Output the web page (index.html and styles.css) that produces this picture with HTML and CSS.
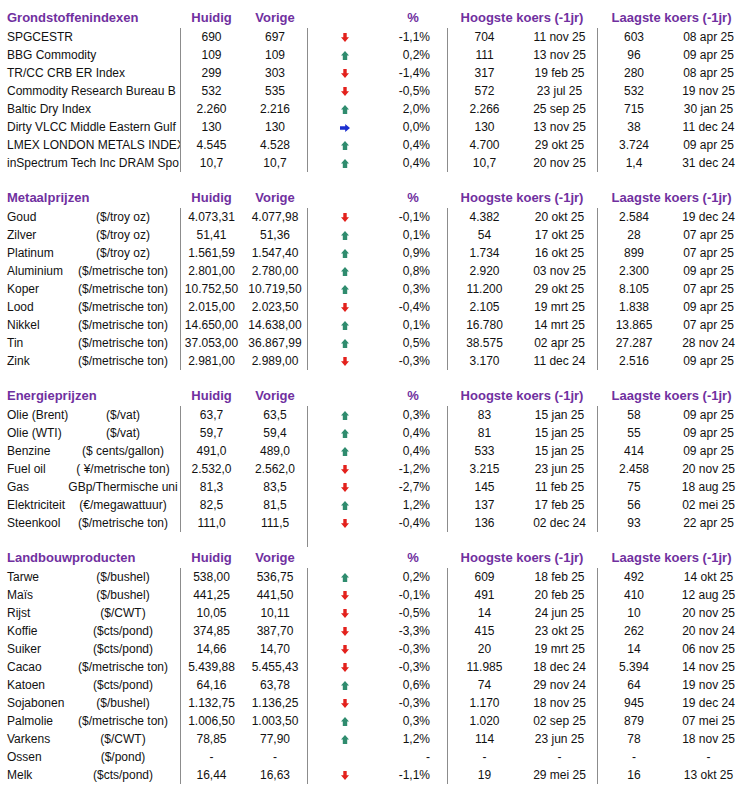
FILE: index.html
```html
<!DOCTYPE html>
<html lang="nl">
<head>
<meta charset="utf-8">
<title>Grondstoffen</title>
<link rel="stylesheet" href="styles.css">
</head>
<body>
<svg class="defs" aria-hidden="true">
  <symbol id="dn" viewBox="0 0 8 9"><path d="M2.3 0h3.4v4.2H8L4 9 0 4.2h2.3z" fill="#e3211c"/></symbol>
  <symbol id="up" viewBox="0 0 8 9"><path d="M4 0l4 4.6H6.2V9H1.8V4.6H0z" fill="#2f8c6e"/></symbol>
  <symbol id="rt" viewBox="0 0 10 8"><path d="M0 2.3h5.2V0L10 4 5.2 8V5.7H0z" fill="#1b2fd0"/></symbol>
</svg>
<table class="grid">
<colgroup>
<col class="c-name"><col class="c-unit"><col class="c-cur"><col class="c-prev"><col class="c-arrow"><col class="c-pct"><col class="c-hv"><col class="c-hd"><col class="c-lv"><col class="c-ld">
</colgroup>
<tbody>
<tr class="head"><th colspan="2" class="title">Grondstoffenindexen</th><th>Huidig</th><th>Vorige</th><th></th><th class="pct-h">%</th><th colspan="2">Hoogste koers (-1jr)</th><th colspan="2">Laagste koers (-1jr)</th></tr>
<tr class="row"><td colspan="2" class="name clip">SPGCESTR</td><td class="sep">690</td><td>697</td><td class="sep"><svg class="arr"><use href="#dn"/></svg></td><td class="pct">-1,1%</td><td class="sep">704</td><td>11 nov 25</td><td class="sep">603</td><td>08 apr 25</td></tr>
<tr class="row"><td colspan="2" class="name clip">BBG Commodity</td><td class="sep">109</td><td>109</td><td class="sep"><svg class="arr"><use href="#up"/></svg></td><td class="pct">0,2%</td><td class="sep">111</td><td>13 nov 25</td><td class="sep">96</td><td>09 apr 25</td></tr>
<tr class="row"><td colspan="2" class="name clip">TR/CC CRB ER Index</td><td class="sep">299</td><td>303</td><td class="sep"><svg class="arr"><use href="#dn"/></svg></td><td class="pct">-1,4%</td><td class="sep">317</td><td>19 feb 25</td><td class="sep">280</td><td>08 apr 25</td></tr>
<tr class="row"><td colspan="2" class="name clip">Commodity Research Bureau B</td><td class="sep">532</td><td>535</td><td class="sep"><svg class="arr"><use href="#dn"/></svg></td><td class="pct">-0,5%</td><td class="sep">572</td><td>23 jul 25</td><td class="sep">532</td><td>19 nov 25</td></tr>
<tr class="row"><td colspan="2" class="name clip">Baltic Dry Index</td><td class="sep">2.260</td><td>2.216</td><td class="sep"><svg class="arr"><use href="#up"/></svg></td><td class="pct">2,0%</td><td class="sep">2.266</td><td>25 sep 25</td><td class="sep">715</td><td>30 jan 25</td></tr>
<tr class="row"><td colspan="2" class="name clip">Dirty VLCC Middle Eastern Gulf</td><td class="sep">130</td><td>130</td><td class="sep"><svg class="arr wide"><use href="#rt"/></svg></td><td class="pct">0,0%</td><td class="sep">130</td><td>13 nov 25</td><td class="sep">38</td><td>11 dec 24</td></tr>
<tr class="row"><td colspan="2" class="name clip">LMEX LONDON METALS INDEX</td><td class="sep">4.545</td><td>4.528</td><td class="sep"><svg class="arr"><use href="#up"/></svg></td><td class="pct">0,4%</td><td class="sep">4.700</td><td>29 okt 25</td><td class="sep">3.724</td><td>09 apr 25</td></tr>
<tr class="row"><td colspan="2" class="name clip">inSpectrum Tech Inc DRAM Spo</td><td class="sep">10,7</td><td>10,7</td><td class="sep"><svg class="arr"><use href="#up"/></svg></td><td class="pct">0,4%</td><td class="sep">10,7</td><td>20 nov 25</td><td class="sep">1,4</td><td>31 dec 24</td></tr>
<tr class="gap"><td colspan="10"></td></tr>

<tr class="head"><th colspan="2" class="title">Metaalprijzen</th><th>Huidig</th><th>Vorige</th><th></th><th class="pct-h">%</th><th colspan="2">Hoogste koers (-1jr)</th><th colspan="2">Laagste koers (-1jr)</th></tr>
<tr class="row"><td class="name">Goud</td><td><div class="u">($/troy oz)</div></td><td class="sep">4.073,31</td><td>4.077,98</td><td class="sep"><svg class="arr"><use href="#dn"/></svg></td><td class="pct">-0,1%</td><td class="sep">4.382</td><td>20 okt 25</td><td class="sep">2.584</td><td>19 dec 24</td></tr>
<tr class="row"><td class="name">Zilver</td><td><div class="u">($/troy oz)</div></td><td class="sep">51,41</td><td>51,36</td><td class="sep"><svg class="arr"><use href="#up"/></svg></td><td class="pct">0,1%</td><td class="sep">54</td><td>17 okt 25</td><td class="sep">28</td><td>07 apr 25</td></tr>
<tr class="row"><td class="name">Platinum</td><td><div class="u">($/troy oz)</div></td><td class="sep">1.561,59</td><td>1.547,40</td><td class="sep"><svg class="arr"><use href="#up"/></svg></td><td class="pct">0,9%</td><td class="sep">1.734</td><td>16 okt 25</td><td class="sep">899</td><td>07 apr 25</td></tr>
<tr class="row"><td class="name">Aluminium</td><td><div class="u">($/metrische ton)</div></td><td class="sep">2.801,00</td><td>2.780,00</td><td class="sep"><svg class="arr"><use href="#up"/></svg></td><td class="pct">0,8%</td><td class="sep">2.920</td><td>03 nov 25</td><td class="sep">2.300</td><td>09 apr 25</td></tr>
<tr class="row"><td class="name">Koper</td><td><div class="u">($/metrische ton)</div></td><td class="sep">10.752,50</td><td>10.719,50</td><td class="sep"><svg class="arr"><use href="#up"/></svg></td><td class="pct">0,3%</td><td class="sep">11.200</td><td>29 okt 25</td><td class="sep">8.105</td><td>07 apr 25</td></tr>
<tr class="row"><td class="name">Lood</td><td><div class="u">($/metrische ton)</div></td><td class="sep">2.015,00</td><td>2.023,50</td><td class="sep"><svg class="arr"><use href="#dn"/></svg></td><td class="pct">-0,4%</td><td class="sep">2.105</td><td>19 mrt 25</td><td class="sep">1.838</td><td>09 apr 25</td></tr>
<tr class="row"><td class="name">Nikkel</td><td><div class="u">($/metrische ton)</div></td><td class="sep">14.650,00</td><td>14.638,00</td><td class="sep"><svg class="arr"><use href="#up"/></svg></td><td class="pct">0,1%</td><td class="sep">16.780</td><td>14 mrt 25</td><td class="sep">13.865</td><td>07 apr 25</td></tr>
<tr class="row"><td class="name">Tin</td><td><div class="u">($/metrische ton)</div></td><td class="sep">37.053,00</td><td>36.867,99</td><td class="sep"><svg class="arr"><use href="#up"/></svg></td><td class="pct">0,5%</td><td class="sep">38.575</td><td>02 apr 25</td><td class="sep">27.287</td><td>28 nov 24</td></tr>
<tr class="row"><td class="name">Zink</td><td><div class="u">($/metrische ton)</div></td><td class="sep">2.981,00</td><td>2.989,00</td><td class="sep"><svg class="arr"><use href="#dn"/></svg></td><td class="pct">-0,3%</td><td class="sep">3.170</td><td>11 dec 24</td><td class="sep">2.516</td><td>09 apr 25</td></tr>
<tr class="gap"><td colspan="10"></td></tr>

<tr class="head"><th colspan="2" class="title">Energieprijzen</th><th>Huidig</th><th>Vorige</th><th></th><th class="pct-h">%</th><th colspan="2">Hoogste koers (-1jr)</th><th colspan="2">Laagste koers (-1jr)</th></tr>
<tr class="row"><td class="name">Olie (Brent)</td><td><div class="u">($/vat)</div></td><td class="sep">63,7</td><td>63,5</td><td class="sep"><svg class="arr"><use href="#up"/></svg></td><td class="pct">0,3%</td><td class="sep">83</td><td>15 jan 25</td><td class="sep">58</td><td>09 apr 25</td></tr>
<tr class="row"><td class="name">Olie (WTI)</td><td><div class="u">($/vat)</div></td><td class="sep">59,7</td><td>59,4</td><td class="sep"><svg class="arr"><use href="#up"/></svg></td><td class="pct">0,4%</td><td class="sep">81</td><td>15 jan 25</td><td class="sep">55</td><td>09 apr 25</td></tr>
<tr class="row"><td class="name">Benzine</td><td><div class="u">($ cents/gallon)</div></td><td class="sep">491,0</td><td>489,0</td><td class="sep"><svg class="arr"><use href="#up"/></svg></td><td class="pct">0,4%</td><td class="sep">533</td><td>15 jan 25</td><td class="sep">414</td><td>09 apr 25</td></tr>
<tr class="row"><td class="name">Fuel oil</td><td><div class="u">( ¥/metrische ton)</div></td><td class="sep">2.532,0</td><td>2.562,0</td><td class="sep"><svg class="arr"><use href="#dn"/></svg></td><td class="pct">-1,2%</td><td class="sep">3.215</td><td>23 jun 25</td><td class="sep">2.458</td><td>20 nov 25</td></tr>
<tr class="row"><td class="name">Gas</td><td><div class="u">GBp/Thermische uni</div></td><td class="sep">81,3</td><td>83,5</td><td class="sep"><svg class="arr"><use href="#dn"/></svg></td><td class="pct">-2,7%</td><td class="sep">145</td><td>11 feb 25</td><td class="sep">75</td><td>18 aug 25</td></tr>
<tr class="row"><td class="name">Elektriciteit</td><td><div class="u">(€/megawattuur)</div></td><td class="sep">82,5</td><td>81,5</td><td class="sep"><svg class="arr"><use href="#up"/></svg></td><td class="pct">1,2%</td><td class="sep">137</td><td>17 feb 25</td><td class="sep">56</td><td>02 mei 25</td></tr>
<tr class="row"><td class="name">Steenkool</td><td><div class="u">($/metrische ton)</div></td><td class="sep">111,0</td><td>111,5</td><td class="sep"><svg class="arr"><use href="#dn"/></svg></td><td class="pct">-0,4%</td><td class="sep">136</td><td>02 dec 24</td><td class="sep">93</td><td>22 apr 25</td></tr>
<tr class="gap"><td colspan="4"></td><td class="sep"></td><td colspan="5"></td></tr>

<tr class="head"><th colspan="2" class="title">Landbouwproducten</th><th>Huidig</th><th>Vorige</th><th></th><th class="pct-h">%</th><th colspan="2">Hoogste koers (-1jr)</th><th colspan="2">Laagste koers (-1jr)</th></tr>
<tr class="row"><td class="name">Tarwe</td><td><div class="u">($/bushel)</div></td><td class="sep">538,00</td><td>536,75</td><td class="sep"><svg class="arr"><use href="#up"/></svg></td><td class="pct">0,2%</td><td class="sep">609</td><td>18 feb 25</td><td class="sep">492</td><td>14 okt 25</td></tr>
<tr class="row"><td class="name">Maïs</td><td><div class="u">($/bushel)</div></td><td class="sep">441,25</td><td>441,50</td><td class="sep"><svg class="arr"><use href="#dn"/></svg></td><td class="pct">-0,1%</td><td class="sep">491</td><td>20 feb 25</td><td class="sep">410</td><td>12 aug 25</td></tr>
<tr class="row"><td class="name">Rijst</td><td><div class="u">($/CWT)</div></td><td class="sep">10,05</td><td>10,11</td><td class="sep"><svg class="arr"><use href="#dn"/></svg></td><td class="pct">-0,5%</td><td class="sep">14</td><td>24 jun 25</td><td class="sep">10</td><td>20 nov 25</td></tr>
<tr class="row"><td class="name">Koffie</td><td><div class="u">($cts/pond)</div></td><td class="sep">374,85</td><td>387,70</td><td class="sep"><svg class="arr"><use href="#dn"/></svg></td><td class="pct">-3,3%</td><td class="sep">415</td><td>23 okt 25</td><td class="sep">262</td><td>20 nov 24</td></tr>
<tr class="row"><td class="name">Suiker</td><td><div class="u">($cts/pond)</div></td><td class="sep">14,66</td><td>14,70</td><td class="sep"><svg class="arr"><use href="#dn"/></svg></td><td class="pct">-0,3%</td><td class="sep">20</td><td>19 mrt 25</td><td class="sep">14</td><td>06 nov 25</td></tr>
<tr class="row"><td class="name">Cacao</td><td><div class="u">($/metrische ton)</div></td><td class="sep">5.439,88</td><td>5.455,43</td><td class="sep"><svg class="arr"><use href="#dn"/></svg></td><td class="pct">-0,3%</td><td class="sep">11.985</td><td>18 dec 24</td><td class="sep">5.394</td><td>14 nov 25</td></tr>
<tr class="row"><td class="name">Katoen</td><td><div class="u">($cts/pond)</div></td><td class="sep">64,16</td><td>63,78</td><td class="sep"><svg class="arr"><use href="#up"/></svg></td><td class="pct">0,6%</td><td class="sep">74</td><td>29 nov 24</td><td class="sep">64</td><td>19 nov 25</td></tr>
<tr class="row"><td class="name">Sojabonen</td><td><div class="u">($/bushel)</div></td><td class="sep">1.132,75</td><td>1.136,25</td><td class="sep"><svg class="arr"><use href="#dn"/></svg></td><td class="pct">-0,3%</td><td class="sep">1.170</td><td>18 nov 25</td><td class="sep">945</td><td>19 dec 24</td></tr>
<tr class="row"><td class="name">Palmolie</td><td><div class="u">($/metrische ton)</div></td><td class="sep">1.006,50</td><td>1.003,50</td><td class="sep"><svg class="arr"><use href="#up"/></svg></td><td class="pct">0,3%</td><td class="sep">1.020</td><td>02 sep 25</td><td class="sep">879</td><td>07 mei 25</td></tr>
<tr class="row"><td class="name">Varkens</td><td><div class="u">($/CWT)</div></td><td class="sep">78,85</td><td>77,90</td><td class="sep"><svg class="arr"><use href="#up"/></svg></td><td class="pct">1,2%</td><td class="sep">114</td><td>23 jun 25</td><td class="sep">78</td><td>18 nov 25</td></tr>
<tr class="row"><td class="name">Ossen</td><td><div class="u">($/pond)</div></td><td class="sep">-</td><td>-</td><td class="sep"></td><td class="pct">-</td><td class="sep">-</td><td>-</td><td class="sep">-</td><td>-</td></tr>
<tr class="row"><td class="name">Melk</td><td><div class="u">($cts/pond)</div></td><td class="sep">16,44</td><td>16,63</td><td class="sep"><svg class="arr"><use href="#dn"/></svg></td><td class="pct">-1,1%</td><td class="sep">19</td><td>29 mei 25</td><td class="sep">16</td><td>13 okt 25</td></tr>
</tbody>
</table>
</body>
</html>
```

FILE: styles.css
```css
html, body {
  background: #ffffff;
}

body {
  margin: 0;
  padding-top: 7px;
  font-family: "Liberation Sans", Arial, sans-serif;
  font-size: 12px;
  color: #111111;
}

.defs {
  display: block;
  width: 0;
  height: 0;
  overflow: hidden;
}

.grid {
  table-layout: fixed;
  width: 746px;
  border-collapse: separate;
  border-spacing: 0;
}

.c-name { width: 66px; }
.c-unit { width: 114px; }
.c-cur { width: 63px; }
.c-prev { width: 64px; }
.c-arrow { width: 76px; }
.c-pct { width: 64px; }
.c-hv { width: 75px; }
.c-hd { width: 75px; }
.c-lv { width: 74px; }
.c-ld { width: 75px; }

.head th {
  height: 21px;
  padding: 0;
  line-height: 21px;
  font-size: 13px;
  font-weight: bold;
  color: #7030a0;
  text-align: center;
  white-space: nowrap;
  vertical-align: middle;
}

.head th.title {
  text-align: left;
  padding-left: 7px;
}

.head th.pct-h {
  padding-right: 4px;
}

.row td {
  height: 18px;
  padding: 0;
  line-height: 18px;
  white-space: nowrap;
  text-align: center;
  vertical-align: middle;
}

.row td.name {
  text-align: left;
  padding-left: 7px;
}

.row td.clip {
  overflow: hidden;
}

.u {
  display: flex;
  justify-content: center;
  overflow: hidden;
  white-space: nowrap;
}

td.sep {
  box-shadow: inset 1px 0 0 #8c8c8c;
}

.row td.pct {
  text-align: right;
  padding-right: 17px;
}

.gap td {
  height: 15px;
  padding: 0;
}

.arr {
  display: inline-block;
  width: 8px;
  height: 9px;
  vertical-align: middle;
}

.arr.wide {
  width: 10px;
  height: 8px;
}
```
